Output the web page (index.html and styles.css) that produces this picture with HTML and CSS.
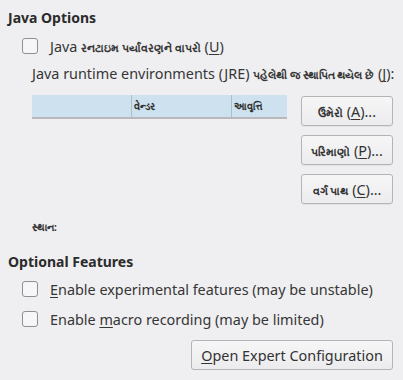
FILE: index.html
```html
<!DOCTYPE html>
<html lang="gu">
<head>
  <meta charset="UTF-8">
  <title>Advanced</title>
  <link rel="stylesheet" href="styles.css">
</head>
<body>
  <div class="page">
    <section class="java-section">
      <h2 class="section-title">Java Options</h2>
      <label class="check-row">
        <span class="check-box"></span>
        <span>Java <span class="gu">રનટાઇમ પર્યાવરણને વાપરો</span> (<u>U</u>)</span>
      </label>
      <div class="jre-label">Java runtime environments (JRE) <span class="gu">પહેલેથી જ સ્થાપિત થયેલ છે</span> (<u>J</u>):</div>
      <div class="jre-area">
        <div class="jre-table">
          <div class="jre-head">
            <div class="col col-first"></div>
            <div class="col col-vendor gu">વેન્ડર</div>
            <div class="col col-version gu">આવૃત્તિ</div>
          </div>
        </div>
        <div class="jre-buttons">
          <button class="btn"><span class="gu">ઉમેરો</span> (<u>A</u>)...</button>
          <button class="btn"><span class="gu">પરિમાણો</span> (<u>P</u>)...</button>
          <button class="btn"><span class="gu">વર્ગ પાથ</span> (<u>C</u>)...</button>
        </div>
      </div>
      <div class="location gu">સ્થાન:</div>
    </section>

    <section class="optional-section">
      <h2 class="section-title">Optional Features</h2>
      <label class="check-row">
        <span class="check-box"></span>
        <span><u>E</u>nable experimental features (may be unstable)</span>
      </label>
      <label class="check-row">
        <span class="check-box"></span>
        <span>Enable <u>m</u>acro recording (may be limited)</span>
      </label>
      <div class="expert-row">
        <button class="btn btn-expert"><u>O</u>pen Expert Configuration</button>
      </div>
    </section>
  </div>
</body>
</html>
```

FILE: styles.css
```css
body {
  margin: 0;
  background: #efeff1;
  font-family: "Noto Sans", "Open Sans", sans-serif;
  font-size: 14.4px;
  color: #363636;
}

.page {
  padding: 8px 10px 0 8px;
}

.section-title {
  margin: 0;
  font-size: 14px;
  font-weight: bold;
  color: #2b2b2b;
  line-height: 20px;
}

.gu {
  font-size: 11px;
  font-weight: bold;
}

u {
  text-decoration-thickness: 1px;
  text-underline-offset: 2px;
}

.check-row {
  display: flex;
  align-items: center;
  gap: 12px;
  padding-left: 14px;
  height: 20px;
  margin-top: 10px;
}

.java-section .check-row {
  margin-top: 8px;
}

.check-box {
  width: 14px;
  height: 14px;
  border: 1px solid #8f8f91;
  border-radius: 3px;
  background: #f6f6f7;
}

.jre-label {
  margin-top: 7px;
  padding-left: 24px;
  line-height: 22px;
  white-space: nowrap;
}

.jre-label .gu {
  font-size: 10.5px;
}

.jre-area {
  display: flex;
  gap: 14px;
  margin-top: 9px;
  padding-left: 24px;
}

.jre-table {
  width: 255px;
  align-self: flex-start;
}

.jre-head {
  display: flex;
  height: 22px;
  background: #cde2ee;
  border-bottom: 2px solid #b9b9bc;
}

.col {
  font-size: 10px;
  line-height: 22px;
  padding-left: 2px;
  border-right: 1px solid #a9bfcc;
  color: #333;
}

.col-first {
  width: 97px;
}

.col-vendor {
  width: 97px;
}

.col-version {
  flex: 1;
  border-right: none;
}

.jre-buttons {
  display: flex;
  flex-direction: column;
  gap: 9px;
  margin-top: 1px;
}

.btn {
  font-family: inherit;
  font-size: 14.4px;
  color: #333;
  background: linear-gradient(#f6f6f7, #ececee);
  border: 1px solid #b4b4b6;
  border-radius: 3px;
  height: 30px;
  padding: 0 6px;
  white-space: nowrap;
  box-shadow: 0 1px 0 rgba(0, 0, 0, 0.05);
}

.jre-buttons .btn {
  width: 92px;
}

.location {
  margin-top: 13px;
  padding-left: 24px;
  font-size: 10px;
  line-height: 20px;
}

.optional-section {
  margin-top: 15px;
}

.optional-section .check-row:first-of-type {
  margin-top: 7px;
}

.expert-row {
  display: flex;
  justify-content: flex-end;
  margin-top: 11px;
}

.btn-expert {
  width: 202px;
}
```
